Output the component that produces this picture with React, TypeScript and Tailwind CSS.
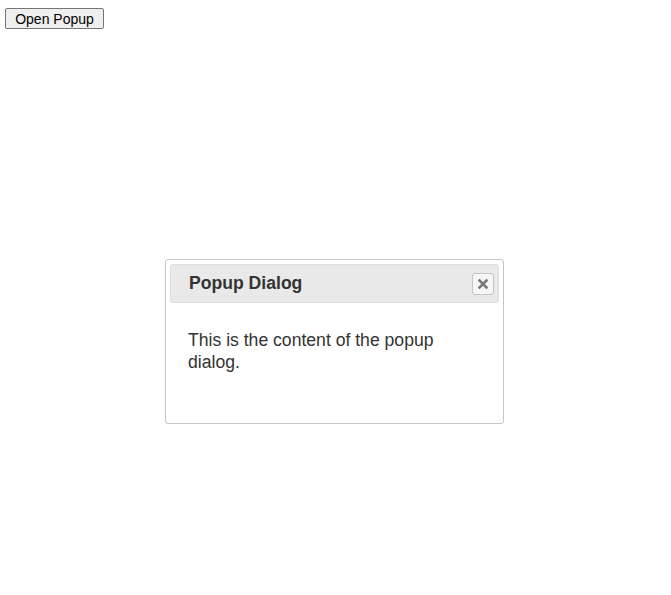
export default function App() {
  return (
    <div className="relative min-h-[595px] bg-white font-['Liberation_Sans',Arial,sans-serif]">
      <div className="pl-[5px] pt-[8px]">
        <button className="block h-[21px] w-[99px] rounded-[2px] border border-[#767676] bg-[#efefef] text-[14px] leading-none text-black">
          Open Popup
        </button>
      </div>

      <div className="absolute left-[165px] top-[259px] flex h-[165px] w-[339px] flex-col rounded-[3px] border border-[#c5c5c5] bg-white p-[4px]">
        <div className="flex h-[39px] items-center justify-between rounded-[3px] border border-[#dddddd] bg-[#e9e9e9] pl-[18px] pr-[4px]">
          <span className="text-[17.6px] font-bold text-[#333333]">Popup Dialog</span>
          <button className="flex h-[22px] w-[22px] items-center justify-center rounded-[3px] border border-[#c5c5c5] bg-[#f6f6f6]">
            <svg width="10" height="10" viewBox="0 0 10 10">
              <path d="M1.5 1.5 L8.5 8.5 M8.5 1.5 L1.5 8.5" stroke="#777777" strokeWidth="2.6" strokeLinecap="square" />
            </svg>
          </button>
        </div>
        <div className="px-[18px] pt-[26px] text-[17.6px] leading-[22px] text-[#333333]">
          <p className="w-[280px]">This is the content of the popup dialog.</p>
        </div>
      </div>
    </div>
  );
}
